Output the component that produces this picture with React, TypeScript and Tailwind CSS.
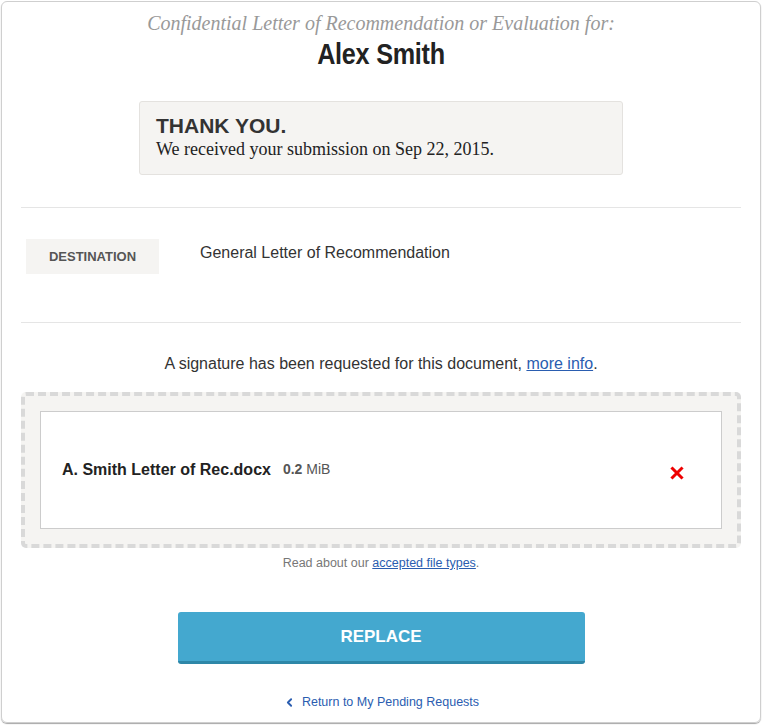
import { ChevronLeft } from "lucide-react"

export default function App() {
  return (
    <div className="w-[762px] h-[726px] bg-white p-px font-['Liberation_Sans',Arial,sans-serif]">
      <div className="h-[722px] rounded-md border border-[#cfcfcf] shadow-[0_1px_1px_rgba(0,0,0,0.35)] flex flex-col items-center">
        <div className="mt-[7px] text-[20px] italic text-[#999] font-['Liberation_Serif',serif] leading-[28px]">
          Confidential Letter of Recommendation or Evaluation for:
        </div>
        <div className="mt-[0px] inline-block scale-x-[0.84] text-[30px] font-bold text-[#222] leading-[34px] tracking-[-0.3px]">
          Alex Smith
        </div>

        <div className="mt-[30px] w-[484px] h-[74px] rounded-[3px] border border-[#e4e2df] bg-[#f5f4f2] px-[16px] pt-[12px]">
          <div className="text-[21px] font-bold text-[#333] leading-[24px]">THANK YOU.</div>
          <div className="text-[18px] text-[#222] leading-[22px] font-['Liberation_Serif',serif]">
            We received your submission on Sep 22, 2015.
          </div>
        </div>

        <div className="mt-[32px] w-[720px] border-t border-[#e5e5e5]" />

        <div className="w-[720px] h-[114px] flex items-start pt-[31px]">
          <div className="ml-[5px] w-[133px] h-[35px] bg-[#f5f4f2] flex items-center justify-center text-[13px] font-bold text-[#555]">
            DESTINATION
          </div>
          <div className="ml-[41px] mt-[2px] text-[16px] text-[#333]">General Letter of Recommendation</div>
        </div>

        <div className="w-[720px] border-t border-[#e5e5e5]" />

        <div className="mt-[31px] text-[16px] text-[#333] leading-[20px]">
          A signature has been requested for this document,{" "}
          <a href="#" className="text-[#2a5db0] underline">more info</a>.
        </div>

        <div className="mt-[18px] w-[720px] h-[156px] rounded-[5px] border-4 border-dashed border-[#d9d9d9] bg-[#f5f4f2] p-[15px]">
          <div className="h-[118px] border border-[#cccccc] bg-white flex items-center pl-[21px] pr-[37px]">
            <span className="text-[16px] font-bold text-[#222]">A. Smith Letter of Rec.docx</span>
            <span className="ml-[12px] text-[14px] text-[#555] -mt-[2px]">
              <b>0.2</b> MiB
            </span>
            <svg className="ml-auto mt-[6px]" width="14" height="14" viewBox="0 0 14 14">
              <path d="M2.5 2.5 L11.5 11.5 M11.5 2.5 L2.5 11.5" stroke="#ee0000" strokeWidth="3" strokeLinecap="square" />
            </svg>
          </div>
        </div>

        <div className="mt-[7px] text-[12.5px] text-[#777] leading-[16px]">
          Read about our <a href="#" className="text-[#2a5db0] underline">accepted file types</a>.
        </div>

        <button className="mt-[41px] w-[407px] h-[52px] rounded-[3px] bg-[#44a8cf] border-b-[3px] border-[#2e87a8] text-white text-[17px] font-bold">
          REPLACE
        </button>

        <a href="#" className="mt-[29px] flex items-center gap-[6px] text-[12.5px] text-[#2a5db0]">
          <ChevronLeft size={13} strokeWidth={3.5} />
          Return to My Pending Requests
        </a>
      </div>
    </div>
  )
}
